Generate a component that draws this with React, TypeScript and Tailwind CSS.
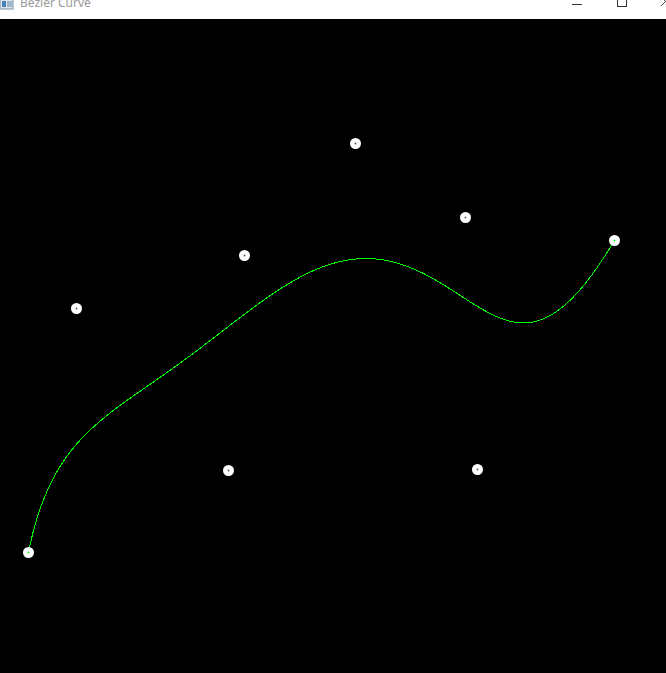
const points: [number, number][] = [
  [28, 552],
  [76, 308],
  [228, 470],
  [244, 255],
  [355, 143],
  [465, 217],
  [477, 469],
  [614, 240],
];

function bezier(pts: [number, number][], t: number): [number, number] {
  let work = pts.map((p) => [p[0], p[1]] as [number, number]);
  while (work.length > 1) {
    const next: [number, number][] = [];
    for (let i = 0; i < work.length - 1; i++) {
      next.push([
        work[i][0] + (work[i + 1][0] - work[i][0]) * t,
        work[i][1] + (work[i + 1][1] - work[i][1]) * t,
      ]);
    }
    work = next;
  }
  return work[0];
}

const curve = Array.from({ length: 801 }, (_, i) => bezier(points, i / 800))
  .map(([x, y]) => `${(x + 0.5).toFixed(2)},${(y + 0.5).toFixed(2)}`)
  .join(" ");

function TitleBar() {
  return (
    <div className="relative flex h-[19px] shrink-0 items-start overflow-hidden bg-white">
      <svg width="14" height="12" viewBox="0 0 14 12" className="-mt-[2px] shrink-0">
        <rect x="0" y="0" width="13" height="11" fill="#dfe6ee" stroke="#7d8fa3" />
        <rect x="2" y="3" width="4" height="6" fill="#4a7fb8" />
        <rect x="7" y="3" width="5" height="6" fill="#9fb6cc" />
      </svg>
      <span
        className="-mt-[5px] ml-[6px] text-[12px] leading-[16px] text-[#9a9a9a]"
        style={{ fontFamily: '"Segoe UI", "Noto Sans", "Liberation Sans", sans-serif' }}
      >
        Bezier Curve
      </span>
      <div className="ml-auto flex items-start">
        <div className="mt-[4px] h-px w-[10px] bg-[#333]" />
        <div className="-mt-[4px] ml-[35px] h-[11px] w-[10px] border border-[#333]" />
        <svg width="10" height="10" viewBox="0 0 10 10" className="-mt-[3px] ml-[34px] mr-[-5px]">
          <path d="M0 0 L9 9 M9 0 L0 9" stroke="#444" strokeWidth="1" />
        </svg>
      </div>
    </div>
  );
}

export default function App() {
  return (
    <div className="flex h-[673px] w-[666px] flex-col overflow-hidden bg-black">
      <TitleBar />
      <div className="relative flex-1 bg-black">
        <svg className="absolute inset-0" width="666" height="654" viewBox="0 19 666 654">
          <polyline
            points={curve}
            fill="none"
            stroke="#00ff00"
            strokeWidth="1"
            shapeRendering="crispEdges"
          />
          {points.map(([x, y], i) => (
            <g key={i}>
              <circle cx={x + 0.5} cy={y + 0.5} r="5.5" fill="#ffffff" />
              <circle
                cx={x + 0.5}
                cy={y + 0.5}
                r="0.9"
                fill={i === 0 || i === points.length - 1 ? "#00ff00" : "#555555"}
              />
            </g>
          ))}
        </svg>
      </div>
    </div>
  );
}
